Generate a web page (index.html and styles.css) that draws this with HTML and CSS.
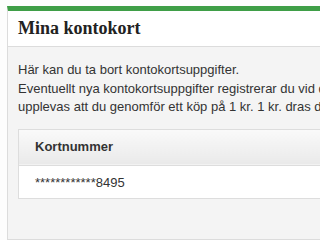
FILE: index.html
```html
<!DOCTYPE html>
<html lang="sv">
<head>
<meta charset="utf-8">
<title>Mina kontokort</title>
<link rel="stylesheet" href="styles.css">
</head>
<body>
<div class="page">
  <section class="panel">
    <header class="panel-head">
      <h2 class="panel-title">Mina kontokort</h2>
    </header>
    <div class="panel-body">
      <p class="intro">Här kan du ta bort kontokortsuppgifter.<br>
      Eventuellt nya kontokortsuppgifter registrerar du vid ditt nästa köp. Det kan<br>
      upplevas att du genomför ett köp på 1 kr. 1 kr. dras dock inte från ditt konto.</p>
      <table class="cards">
        <thead>
          <tr><th>Kortnummer</th><th></th></tr>
        </thead>
        <tbody>
          <tr><td>************8495</td><td></td></tr>
        </tbody>
      </table>
    </div>
  </section>
</div>
</body>
</html>
```
FILE: styles.css
```css
html, body {
  margin: 0;
  padding: 0;
  background: #fdfdfd;
  overflow: hidden;
}
.page {
  padding: 6px 0 0 7px;
  width: 800px;
}
.panel {
  width: 700px;
  border: 1px solid #dcdcdc;
  border-top: 5px solid #3f9e47;
  background: #f4f4f4;
}
.panel-head {
  height: 35px;
  padding: 0 10px;
  background: #ffffff;
  border-bottom: 1px solid #dcdcdc;
  display: flex;
  align-items: center;
}
.panel-title {
  margin: 0;
  font-family: "Liberation Serif", "Times New Roman", serif;
  font-weight: bold;
  font-size: 18px;
  color: #222222;
}
.panel-body {
  padding: 14px 10px 40px;
  font-family: "Liberation Sans", Arial, sans-serif;
  font-size: 13px;
  line-height: 18.5px;
  color: #333333;
}
.intro {
  margin: 0 0 12px;
  white-space: nowrap;
}
.cards {
  width: 100%;
  border-collapse: collapse;
  background: #ffffff;
  border: 1px solid #dddddd;
}
.cards th {
  text-align: left;
  font-weight: bold;
  padding: 7px 16px 9px;
  line-height: 19px;
  color: #333333;
  background: linear-gradient(#fafafa, #e9e9e9);
  border-bottom: 1px solid #dddddd;
}
.cards td {
  padding: 7px 16px 6px;
  line-height: 19px;
  color: #333333;
}
```
